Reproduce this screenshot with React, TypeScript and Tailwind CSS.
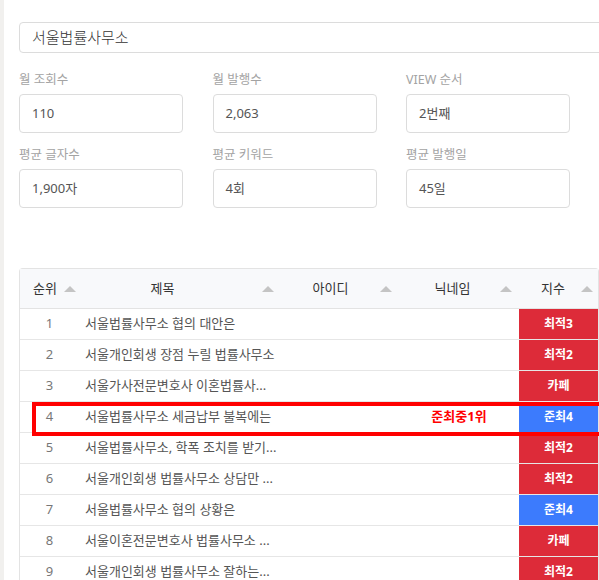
import React from 'react';

type Row = {
  no: number;
  title: string;
  nick?: string;
  badge: string;
  tone: 'red' | 'blue';
};

const rows: Row[] = [
  { no: 1, title: '서울법률사무소 협의 대안은', badge: '최적3', tone: 'red' },
  { no: 2, title: '서울개인회생 장점 누릴 법률사무소', badge: '최적2', tone: 'red' },
  { no: 3, title: '서울가사전문변호사 이혼법률사...', badge: '카페', tone: 'red' },
  { no: 4, title: '서울법률사무소 세금납부 불복에는', nick: '준최중1위', badge: '준최4', tone: 'blue' },
  { no: 5, title: '서울법률사무소, 학폭 조치를 받기...', badge: '최적2', tone: 'red' },
  { no: 6, title: '서울개인회생 법률사무소 상담만 ...', badge: '최적2', tone: 'red' },
  { no: 7, title: '서울법률사무소 협의 상황은', badge: '준최4', tone: 'blue' },
  { no: 8, title: '서울이혼전문변호사 법률사무소 ...', badge: '카페', tone: 'red' },
  { no: 9, title: '서울개인회생 법률사무소 잘하는...', badge: '최적2', tone: 'red' },
];

const stats = [
  { label: '월 조회수', value: '110' },
  { label: '월 발행수', value: '2,063' },
  { label: 'VIEW 순서', value: '2번째' },
  { label: '평균 글자수', value: '1,900자' },
  { label: '평균 키워드', value: '4회' },
  { label: '평균 발행일', value: '45일' },
];

const Arrow = () => (
  <svg width="12" height="6" viewBox="0 0 12 6" className="shrink-0">
    <path d="M6 0 L12 6 L0 6 Z" fill="#c4c4c4" />
  </svg>
);

const font = { fontFamily: '"Noto Sans", "Noto Sans CJK KR", sans-serif' };

export default function App() {
  return (
    <div className="flex h-[580px] w-[599px] overflow-hidden bg-white" style={font}>
      <div className="w-[4px] shrink-0 bg-[#f1f0ee]" />
      <div className="flex-1 pl-[15px] pt-[22px]">
        {/* search box */}
        <div className="flex h-[31px] w-[620px] items-center rounded-[4px] border border-[#dcdcdc] pl-[12px] text-[15px] font-light text-[#333]">
          서울법률사무소
        </div>

        {/* stats */}
        <div className="mt-[19px] grid grid-cols-[164px_164px_164px] gap-x-[29.5px] gap-y-[14px]">
          {stats.map((s) => (
            <div key={s.label}>
              <div className="h-[16px] text-[12.5px] leading-[16px] text-[#a3a3a3]">{s.label}</div>
              <div className="mt-[6px] flex h-[39px] items-center rounded-[4px] border border-[#dcdcdc] pl-[12px] text-[13px] text-[#555]">
                {s.value}
              </div>
            </div>
          ))}
        </div>

        {/* table */}
        <div className="relative mt-[60px] w-[580px] rounded-t-[4px] border-l border-r border-t border-[#e3e3e3]">
          <div className="flex h-[40px] border-b border-[#e3e3e3] bg-[#f8f9fb] text-[13px] text-[#333]">
            <div className="flex w-[59px] items-center gap-[7px] pl-[13px]">
              <span>순위</span>
              <Arrow />
            </div>
            <div className="flex w-[202px] items-center pr-[7px]">
              <span className="flex-1 pr-[16px] text-center">제목</span>
              <Arrow />
            </div>
            <div className="flex w-[118px] items-center pr-[7px]">
              <span className="flex-1 text-center">아이디</span>
              <Arrow />
            </div>
            <div className="flex w-[120px] items-center pr-[7px]">
              <span className="flex-1 pl-[6px] text-center">닉네임</span>
              <Arrow />
            </div>
            <div className="flex w-[79px] items-center pr-[5px]">
              <span className="flex-1 pl-[6px] text-center">지수</span>
              <Arrow />
            </div>
          </div>

          {rows.map((r) => (
            <div key={r.no} className="flex h-[31px] border-b border-[#e6e6e6] text-[13px]">
              <div className="flex w-[59px] items-center justify-center text-[#777]">{r.no}</div>
              <div className="flex w-[202px] items-center pl-[6px] text-[#555]">
                <span className="whitespace-nowrap">{r.title}</span>
              </div>
              <div className="w-[118px]" />
              <div className="flex w-[120px] items-center justify-center font-bold text-[#ff0000] text-[13px]">
                {r.nick}
              </div>
              <div
                className={
                  'flex w-[79px] items-center justify-center text-[12px] font-bold text-white ' +
                  (r.tone === 'red' ? 'bg-[#dd2b39]' : 'bg-[#3c7bfd]')
                }
              >
                {r.badge}
              </div>
            </div>
          ))}

          {/* highlight around row 4 */}
          <div className="pointer-events-none absolute left-[12px] top-[133px] h-[34px] w-[600px] border-[4px] border-[#ff0000]" />
        </div>
      </div>
    </div>
  );
}
